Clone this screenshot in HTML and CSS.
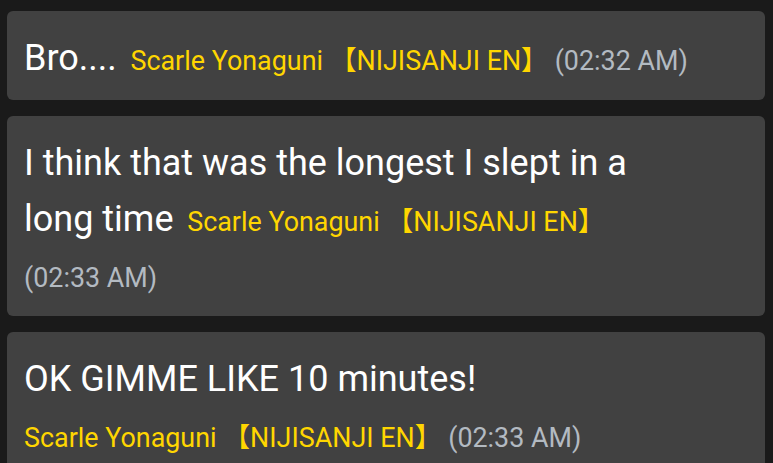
FILE: index.html
```html
<!DOCTYPE html>
<html>
<head>
<meta charset="utf-8">
<link rel="stylesheet" href="styles.css">
</head>
<body>
<div class="chat">
  <div class="msg"><span class="text">Bro....</span> <span class="author">Scarle Yonaguni 【NIJISANJI EN】</span> <span class="time">(02:32 AM)</span></div>
  <div class="msg"><span class="text">I think that was the longest I slept in a long time</span> <span class="author">Scarle Yonaguni 【NIJISANJI EN】</span> <span class="time">(02:33 AM)</span></div>
  <div class="msg"><span class="text">OK GIMME LIKE 10 minutes!</span> <span class="author">Scarle Yonaguni 【NIJISANJI EN】</span> <span class="time">(02:33 AM)</span></div>
</div>
</body>
</html>
```
FILE: styles.css
```css
html, body {
  margin: 0;
  background: #1a1a1a;
}
body {
  padding: 11px 8px 0 7px;
  font-family: Roboto, "Noto Sans CJK JP", sans-serif;
}
.chat {
  display: flex;
  flex-direction: column;
  gap: 16px;
}
.msg {
  background: #414141;
  border-radius: 6px;
  padding: 22px 72px 10.5px 17px;
  line-height: 56px;
  font-size: 26.88px;
}
.text {
  color: #ffffff;
  font-size: 36px;
  line-height: 50px;
  margin-right: 7px;
}
.author {
  color: #ffd600;
  white-space: nowrap;
}
.time {
  color: #b3bac1;
  white-space: nowrap;
}
```
